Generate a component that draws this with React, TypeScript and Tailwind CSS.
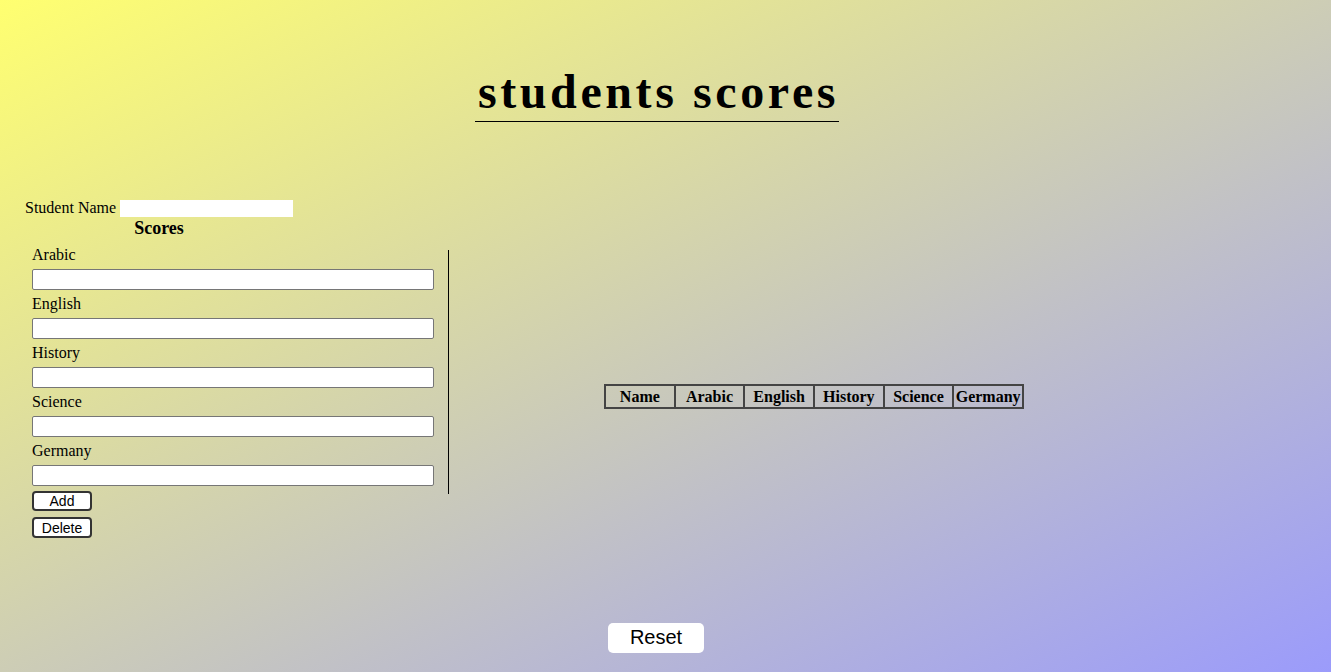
import React from "react";

const serif = { fontFamily: '"Liberation Serif", "Times New Roman", serif' };

export default function App() {
  const subjects = ["Arabic", "English", "History", "Science", "Germany"];
  const cols = ["Name", "Arabic", "English", "History", "Science", "Germany"];
  return (
    <div
      className="relative w-[1331px] h-[672px] overflow-hidden bg-[linear-gradient(to_bottom_right,#ffff70,#9b9bfb)] text-black"
      style={serif}
    >
      <div className="w-[1314px] flex justify-center pt-[63px]">
        <h1 className="inline-block border-b border-black text-[48px] leading-[58px] font-bold tracking-[0.075em] pl-[3px]">
          students scores
        </h1>
      </div>

      <div className="flex mt-[77px]">
        <div className="w-[449px] shrink-0">
          <div className="flex items-center pl-[25px] h-[18px] text-[16px]">
            <span>Student Name</span>
            <input className="ml-[4px] w-[173px] h-[17px] bg-white outline-none border-0" />
          </div>
          <div className="w-[318px] text-center text-[18px] font-bold leading-[20px] mt-[1px]">Scores</div>
          <div className="mt-[12px] ml-[25px] border-r border-black pl-[7px] pr-[14px] pb-[8px] flex flex-col">
            {subjects.map((s, i) => (
              <div key={s} className={i === 0 ? "-mt-[4px]" : "pt-[5px]"}>
                <div className="text-[16px] leading-[18px] h-[18px]">{s}</div>
                <input className="mt-[5px] block w-[402px] h-[21px] bg-white border border-[#767676] rounded-[2px]" />
              </div>
            ))}
          </div>
          <div className="ml-[32px] -mt-[3px] flex flex-col gap-[6px]" style={{ fontFamily: '"Liberation Sans", Arial, sans-serif' }}>
            <button className="w-[60px] h-[20px] bg-white border-2 border-[#333] rounded-[4px] text-[14px] leading-[14px]">Add</button>
            <button className="w-[60px] h-[21px] bg-white border-2 border-[#333] rounded-[4px] text-[14px] leading-[14px]">Delete</button>
          </div>
        </div>
        <div className="pl-[155px] pt-[185px]">
          <table className="border-collapse border-2 border-[#444] table-fixed w-[420px]">
            <thead>
              <tr>
                {cols.map((c) => (
                  <th
                    key={c}
                    className="border-2 border-[#444] h-[23px] p-0 text-[16px] font-bold leading-[18px]"
                  >
                    {c}
                  </th>
                ))}
              </tr>
            </thead>
          </table>
        </div>
      </div>

      <div className="absolute left-[608px] top-[623px]">
        <button
          className="w-[96px] h-[30px] bg-white rounded-[5px] text-[20px] leading-[22px] pb-[2px]"
          style={{ fontFamily: '"Liberation Sans", Arial, sans-serif' }}
        >
          Reset
        </button>
      </div>
    </div>
  );
}
